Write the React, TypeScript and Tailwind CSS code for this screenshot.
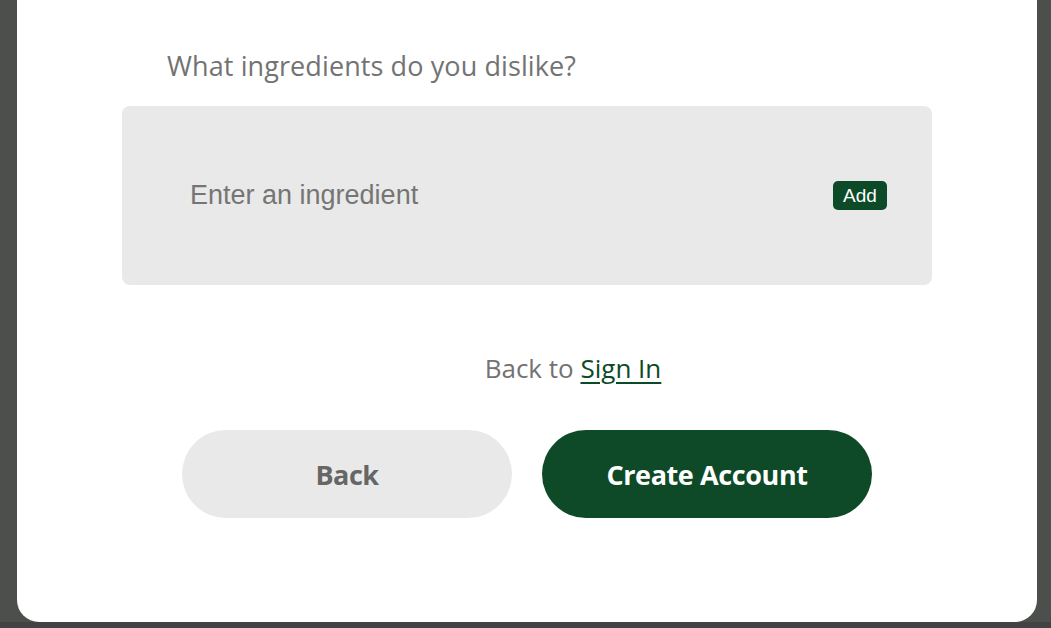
import React, { useState } from "react";

export default function App() {
  const [ingredient, setIngredient] = useState("");

  return (
    <div className="w-[1051px] h-[628px] overflow-hidden bg-[#4c4f4c] flex flex-col" style={{ fontFamily: '"Open Sans", "Noto Sans", sans-serif' }}>
      <div className="ml-[17px] w-[1020px] h-[622px] bg-white rounded-b-[22px] flex flex-col items-center">
        <div className="w-[810px] pt-[48px]">
          <h2 className="ml-[45px] text-[27px] leading-[36px] text-[#737373] font-normal tracking-[0.1px]">
            What ingredients do you dislike?
          </h2>
        </div>

        {/* Ingredient input */}
        <div className="mt-[22px] w-[810px] h-[179px] bg-[#e9e9e9] rounded-[8px] flex items-center pl-[68px] pr-[45px]">
          <input
            value={ingredient}
            onChange={(e) => setIngredient(e.target.value)}
            placeholder="Enter an ingredient"
            className="flex-1 bg-transparent outline-none text-[27px] text-[#333] placeholder:text-[#757575]"
            style={{ fontFamily: '"Liberation Sans", Arial, sans-serif' }}
          />
          <button
            className="w-[54px] h-[29px] rounded-[5px] bg-[#0d4a27] text-white text-[19px] leading-none flex items-center justify-center"
            style={{ fontFamily: '"Liberation Sans", Arial, sans-serif' }}
          >
            Add
          </button>
        </div>

        <p className="mt-[66px] ml-[92px] text-[26px] leading-[34px] text-[#737373]">
          Back to{" "}
          <a href="#" className="text-[#0d4a27] underline underline-offset-[4px]">
            Sign In
          </a>
        </p>

        {/* Actions */}
        <div className="mt-[45px] flex gap-[30px]">
          <button className="w-[330px] h-[88px] pt-[3px] rounded-full bg-[#e9e9e9] text-[#666666] text-[27px] font-bold tracking-[-0.5px]">
            Back
          </button>
          <button className="w-[330px] h-[88px] pt-[3px] rounded-full bg-[#0e4a27] text-white text-[27px] font-bold tracking-[-0.4px]">
            Create Account
          </button>
        </div>
      </div>
      <div className="flex-1 bg-[#424242]" />
    </div>
  );
}
